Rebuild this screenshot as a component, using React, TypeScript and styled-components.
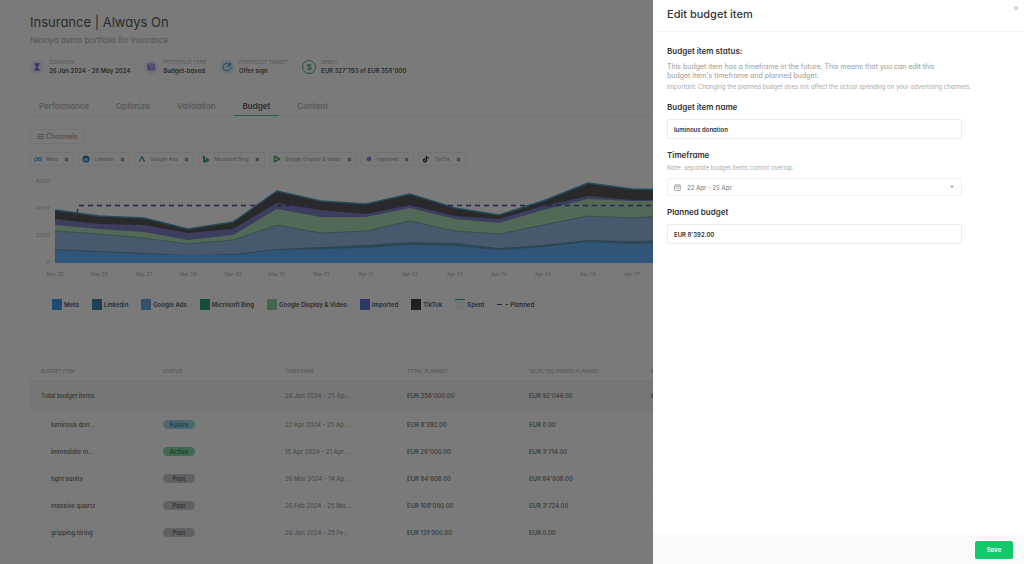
import React from "react";
import styled, { createGlobalStyle } from "styled-components";
import { Hourglass } from "lucide-react";

const GlobalStyle = createGlobalStyle`
  *, *::before, *::after { box-sizing: border-box; }
  body {
    margin: 0;
    background: #fff;
    font-family: Inter, "Liberation Sans", sans-serif;
    font-feature-settings: "cv11";
    color: #5c5c5c;
  }
  button, input, select {
    font-family: inherit;
    font-feature-settings: inherit;
    margin: 0;
  }
  h1, h2, h3, p, dl, dt, dd, ul { margin: 0; padding: 0; }
`;

const Page = styled.main`
  padding: 12px 30px 0;
  height: 100vh;
  overflow: hidden;
`;

const PageTitle = styled.h1`
  font-size: 13px;
  line-height: 20px;
  font-weight: 400;
`;

const Subtitle = styled.p`
  margin-top: 3px;
  font-size: 8px;
  line-height: 10px;
  color: #b4b4b4;
`;

const Facts = styled.dl`
  display: flex;
  gap: 14px;
  margin-top: 14px;
`;

const Fact = styled.div`
  display: grid;
  grid-template-columns: 14px auto;
  column-gap: 5px;
  height: 16px;
`;

const FactIcon = styled.span<{ $tint: string; $color: string; $ring?: boolean }>`
  grid-row: 1 / 3;
  align-self: center;
  display: flex;
  align-items: center;
  justify-content: center;
  width: 14px;
  height: 14px;
  border-radius: 50%;
  background: ${(p) => p.$tint};
  color: ${(p) => p.$color};
  border: ${(p) => (p.$ring ? `1px solid ${p.$color}` : "0")};
  font-size: 8px;
  font-weight: 600;
`;

const FactLabel = styled.dt`
  font-size: 5px;
  line-height: 7px;
  text-transform: uppercase;
  color: #b8b8b8;
`;

const FactValue = styled.dd`
  grid-column: 2;
  font-size: 6px;
  line-height: 9px;
  font-weight: 600;
  white-space: nowrap;
`;

const Tabs = styled.nav`
  display: flex;
  gap: 9px;
  margin-top: 21px;
  border-bottom: 1px solid #f2f2f2;
`;

const Tab = styled.a<{ $active?: boolean }>`
  padding: 4px 9px 3px;
  margin-bottom: -1px;
  border-bottom: 1px solid ${(p) => (p.$active ? "#4fc48a" : "transparent")};
  font-size: 8px;
  line-height: 12px;
  font-weight: ${(p) => (p.$active ? 600 : 500)};
  color: ${(p) => (p.$active ? "#5c5c5c" : "#b4b4b4")};
  text-decoration: none;
`;

const ChannelsButton = styled.button`
  display: flex;
  align-items: center;
  gap: 2px;
  height: 15px;
  margin-top: 13px;
  padding: 0 6px;
  border: 1px solid #f0f0f0;
  border-radius: 2px;
  background: transparent;
  color: #a8a8a8;
  font-size: 7px;
  font-weight: 500;
`;

const Chips = styled.ul`
  display: flex;
  gap: 4px;
  margin-top: 8px;
  list-style: none;
`;

const Chip = styled.li`
  display: flex;
  align-items: center;
  gap: 4px;
  height: 14px;
  padding: 0 3px;
  border: 1px solid #f0f0f0;
  border-radius: 2px;
  color: #ababab;
  font-size: 5px;
  font-weight: 500;
  white-space: nowrap;
`;

const ChipRemove = styled.button`
  display: flex;
  align-items: center;
  justify-content: center;
  width: 7px;
  height: 8px;
  padding: 0;
  margin-left: 1px;
  border: 0;
  background: none;
  color: #8c8c8c;
`;

const ChartDrawing = styled.svg`
  display: block;
  width: 100%;
  height: auto;
  margin-top: 3px;
`;

const AxisText = styled.text`
  font-size: 5px;
  fill: #b4b4b4;
`;

const Legend = styled.ul`
  display: flex;
  gap: 13px;
  margin-top: 19px;
  padding-left: 22px;
  list-style: none;
`;

const LegendItem = styled.li`
  display: flex;
  align-items: center;
  gap: 2px;
  font-size: 6px;
  line-height: 11px;
  font-weight: 600;
  white-space: nowrap;
`;

const Swatch = styled.span<{ $color: string; $line?: string }>`
  width: 10px;
  height: 11px;
  background: ${(p) => p.$color};
  border-top: ${(p) => (p.$line ? `1px solid ${p.$line}` : "0")};
`;

const BudgetTable = styled.table`
  width: 100%;
  margin-top: 52px;
  table-layout: fixed;
  border-collapse: collapse;
`;

const HeadCell = styled.th`
  width: 122px;
  height: 18px;
  padding: 0 11px;
  border-bottom: 1px solid #eee;
  font-size: 5px;
  font-weight: 400;
  text-align: left;
  text-transform: uppercase;
  white-space: nowrap;
  color: #b0b0b0;
`;

const Row = styled.tr<{ $total?: boolean }>`
  height: ${(p) => (p.$total ? 31 : 27)}px;
  background: ${(p) => (p.$total ? "#f7f7f7" : "transparent")};
  border-bottom: 1px solid #f8f8f8;
`;

const Cell = styled.td<{ $muted?: boolean; $nested?: boolean }>`
  padding: 0 11px 0 ${(p) => (p.$nested ? 21 : 11)}px;
  font-size: 6px;
  font-weight: 500;
  white-space: nowrap;
  color: ${(p) => (p.$muted ? "#a0a0a0" : "#6e6e6e")};
`;

const Badge = styled.span<{ $kind: string }>`
  display: block;
  width: 32px;
  border-radius: 5px;
  font-size: 6px;
  line-height: 9px;
  font-weight: 600;
  text-align: center;
  color: ${(p) => (p.$kind === "Future" ? "#4d7f96" : p.$kind === "Active" ? "#3d8560" : "#74747c")};
  background: ${(p) => (p.$kind === "Future" ? "#a0d8ee" : p.$kind === "Active" ? "#86dcae" : "#cbcbd4")};
`;

const Overlay = styled.div`
  position: fixed;
  inset: 0;
  background: rgba(0, 0, 0, 0.52);
`;

const Drawer = styled.aside`
  position: fixed;
  top: 0;
  right: 0;
  bottom: 0;
  display: flex;
  flex-direction: column;
  width: 371px;
  max-width: 100%;
  background: #fff;
  color: #333;
`;

const DrawerHeader = styled.header`
  display: flex;
  justify-content: space-between;
  align-items: flex-start;
  height: 32px;
  padding: 2px 2px 0 14px;
  border-bottom: 1px solid #f5f5f5;
`;

const DrawerTitle = styled.h2`
  font-size: 11px;
  line-height: 24px;
  font-weight: 500;
`;

const CloseButton = styled.button`
  width: 12px;
  height: 12px;
  padding: 0;
  border: 0;
  background: none;
  color: #b5b5b5;
  font-size: 9px;
  line-height: 12px;
`;

const Form = styled.form`
  flex: 1;
  display: flex;
  flex-direction: column;
  padding: 13px 14px 0;
`;

const Section = styled.section`
  display: flex;
  flex-direction: column;
  max-width: 295px;
  margin-bottom: 10px;
`;

const SectionTitle = styled.h3`
  font-size: 8px;
  line-height: 12px;
  font-weight: 600;
`;

const FieldLabel = styled.label`
  font-size: 8px;
  line-height: 12px;
  font-weight: 600;
`;

const Copy = styled.p`
  max-width: 275px;
  margin-top: 5px;
  font-size: 7px;
  line-height: 9px;
  color: #999;
`;

const Note = styled.p`
  margin-top: 3px;
  font-size: 6px;
  line-height: 8px;
  color: #aaa;
  white-space: nowrap;
`;

const TextField = styled.input`
  width: 100%;
  height: 20px;
  margin-top: 6px;
  padding: 0 6px;
  border: 1px solid #ececec;
  border-radius: 2px;
  color: #333;
  font-size: 6px;
  font-weight: 600;
`;

const SelectField = styled.div`
  display: flex;
  align-items: center;
  gap: 6px;
  height: 18px;
  margin-top: 6px;
  padding: 0 6px;
  border: 1px solid #f0f0f0;
  border-radius: 2px;
  color: #999;
`;

const Select = styled.select`
  flex: 1;
  appearance: none;
  padding: 0;
  border: 0;
  background: none;
  color: #999;
  font-size: 6px;
  font-weight: 600;
`;

const DrawerFooter = styled.footer`
  display: flex;
  justify-content: flex-end;
  align-items: center;
  height: 31px;
  padding: 2px 11px 0;
  background: #fafafa;
`;

const SaveButton = styled.button`
  width: 38px;
  height: 18px;
  padding: 0;
  border: 0;
  border-radius: 2px;
  background: #12c868;
  color: #fff;
  font-size: 6px;
  font-weight: 600;
`;

const tabs = ["Performance", "Optimize", "Validation", "Budget", "Content"];

const glyphs: Record<string, React.ReactNode> = {
  Meta: <path d="M.8 5C.8 1.800 2.800 1.800 4 4S7.200 6.200 7.200 4 5.200 1.800 4 4 .8 6.800.8 5Z" fill="none" stroke="#58a8f0" strokeWidth="1.100" />,
  Linkedin: (
    <>
      <circle cx="4" cy="4" r="3.600" fill="#2f7fae" />
      <path d="M2.500 3.400V6M4 6V3.400M4 4.600C4 3 5.700 3 5.700 4.600V6" stroke="#fff" strokeWidth=".8" fill="none" />
    </>
  ),
  "Google Ads": (
    <>
      <path d="M4 1.500 1.500 6.500" stroke="#57b58a" strokeWidth="1.600" />
      <path d="M4 1.500 6.500 6.500" stroke="#4c8fd0" strokeWidth="1.600" />
    </>
  ),
  "Microsoft Bing": <path d="M1 .6 2.800 1.200V5.400L4.800 4.600 3.600 4 3 2.600 7 4V5.700L2.800 7.800 1 6.700Z" fill="#259a7c" />,
  "Google Display & Video": <path d="M1.500 1.200 6.600 4 1.500 6.800Z" fill="none" stroke="#3fae62" strokeWidth="1.500" strokeLinejoin="round" />,
  Imported: <path d="M4 1.300 6.300 2.700V5.300L4 6.700 1.700 5.300V2.700Z" fill="#8d8dd6" />,
  TikTok: <path d="M4.400 1V5.400A1.400 1.400 0 1 1 3 4M4.400 1C4.600 2.300 5.400 2.900 6.600 2.900" fill="none" stroke="#333" strokeWidth="1.500" />,
};

const legend = [
  { name: "Meta", color: "#3fa0f8" },
  { name: "Linkedin", color: "#3d86ae" },
  { name: "Google Ads", color: "#6fa8e4" },
  { name: "Microsoft Bing", color: "#2fa083" },
  { name: "Google Display & Video", color: "#8fd4a3" },
  { name: "Imported", color: "#5a75d0" },
  { name: "TikTok", color: "#444444" },
];

const days = [
  "Mar 25", "Mar 26", "Mar 27", "Mar 28", "Mar 29", "Mar 30", "Mar 31", "Apr 01",
  "Apr 02", "Apr 03", "Apr 04", "Apr 05", "Apr 06", "Apr 07", "Apr 08",
];

/* Upper edge of every stacked series, one value per day. */
const series = {
  tiktok: [41, 47, 49, 60, 53, 22, 32, 35, 25, 39, 46, 32, 14, 20, 21],
  imported: [50, 55, 56, 64, 60, 34, 41, 45, 36, 47, 50, 37, 27, 31, 31],
  display: [56, 60, 63, 71, 66, 40, 48, 48, 39, 50, 54, 41, 30, 32, 32],
  ads: [62, 65, 69, 75, 71, 56, 64, 62, 52, 62, 65, 56, 47, 49, 46],
  linkedin: [80, 82, 84, 86, 85, 80, 78, 76, 73, 74, 79, 76, 71, 72, 71],
  meta: [81, 83, 85, 86, 86, 81, 80, 79, 76, 77, 81, 78, 73, 75, 74],
};

const BASE = 94;
const dayX = (i: number) => Math.round(25 + i * 44.4);
const edge = (v: number[]) => v.map((y, i) => `${dayX(i)},${y}`).join(" ");
const area = (v: number[]) => `${edge(v)} ${dayX(v.length - 1)},${BASE} ${dayX(0)},${BASE}`;

const rows = [
  ["luminous don...", "Future", "22 Apr 2024 - 25 Ap...", "EUR 8'392.00", "EUR 0.00"],
  ["immediate m...", "Active", "15 Apr 2024 - 21 Apr ...", "EUR 26'000.00", "EUR 3'714.00"],
  ["tight sanity", "Past", "26 Mar 2024 - 14 Ap...", "EUR 84'608.00", "EUR 84'608.00"],
  ["massive quartz", "Past", "26 Feb 2024 - 25 Ma...", "EUR 108'000.00", "EUR 3'724.00"],
  ["gripping hiring", "Past", "26 Jan 2024 - 25 Fe...", "EUR 131'000.00", "EUR 0.00"],
];

function Chart() {
  return (
    <ChartDrawing viewBox="0 0 964 111" role="img" aria-label="Spent and planned budget per day">
      {["6,000", "4,000", "2,000", "0"].map((label, i) => (
        <AxisText key={label} x="20" y={14 + i * 27} textAnchor="end">{label}</AxisText>
      ))}
      <polygon points={area(series.tiktok)} fill="#575757" />
      <polygon points={area(series.imported)} fill="#7f7fc8" />
      <polygon points={area(series.display)} fill="#aedbb8" />
      <polygon points={area(series.ads)} fill="#96b9e4" />
      <polygon points={area(series.linkedin)} fill="#5f93ae" />
      <polygon points={area(series.meta)} fill="#66b1fa" />
      <polyline points={edge(series.ads)} fill="none" stroke="#6cab9c" strokeWidth="1" />
      <polyline points={edge(series.tiktok)} fill="none" stroke="#4d9dbb" strokeWidth="1.500" />
      <path d="M47.500 44V40M49 36.500H964" fill="none" stroke="#564e9c" strokeWidth="1.300" strokeDasharray="5 4" />
      {days.map((d, i) => (
        <AxisText key={d} x={dayX(i)} y="107" textAnchor="middle">{d}</AxisText>
      ))}
    </ChartDrawing>
  );
}

export default function App() {
  return (
    <>
      <GlobalStyle />
      <Page>
        <PageTitle>Insurance | Always On</PageTitle>
        <Subtitle>Nexoya demo portfolio for insurance</Subtitle>
        <Facts>
          <Fact>
            <FactIcon $tint="#eeeafd" $color="#7c5fd8"><Hourglass size={8} fill="currentColor" /></FactIcon>
            <FactLabel>Duration</FactLabel>
            <FactValue>26 Jan 2024 - 26 May 2024</FactValue>
          </Fact>
          <Fact>
            <FactIcon $tint="#eeeafd" $color="#7c5fd8">
              <svg width="8" height="8" viewBox="0 0 8 8" fill="none" stroke="currentColor" strokeWidth=".9">
                <rect x=".8" y="1" width="6.400" height="6" rx="1" />
                <path d="M.8 3H7.200M.8 5H7.200M2.600 3V7" />
              </svg>
            </FactIcon>
            <FactLabel>Portfolio type</FactLabel>
            <FactValue>Budget-based</FactValue>
          </Fact>
          <Fact>
            <FactIcon $tint="#d8f0fa" $color="#3ba3cc">
              <svg width="10" height="10" viewBox="0 0 10 10" fill="none" stroke="currentColor">
                <path d="M6.300 1.600A3.700 3.700 0 1 0 8.500 4.200M4.600 5.500 8.600 1.400M6.400 3.600V2L8 .6V2H9.400L8 3.600Z" />
              </svg>
            </FactIcon>
            <FactLabel>Portfolio target</FactLabel>
            <FactValue>Offer sign</FactValue>
          </Fact>
          <Fact>
            <FactIcon $tint="transparent" $color="#45b87c" $ring>$</FactIcon>
            <FactLabel>Spent</FactLabel>
            <FactValue>EUR 327'793 of EUR 358'000</FactValue>
          </Fact>
        </Facts>
        <Tabs>
          {tabs.map((t) => (
            <Tab key={t} href="#" $active={t === "Budget"}>{t}</Tab>
          ))}
        </Tabs>
        <ChannelsButton type="button">
          <svg width="7" height="7" viewBox="0 0 7 7" fill="none" stroke="currentColor" strokeWidth=".8">
            <path d="M0 1.500H7M0 3.500H7M0 5.500H7M4.800.6V2.400M2 2.600V4.400M4.800 4.600V6.400" />
          </svg>
          Channels
        </ChannelsButton>
        <Chips>
          {legend.map(({ name }) => (
            <Chip key={name}>
              <svg width="8" height="8" viewBox="0 0 8 8">{glyphs[name]}</svg>
              {name}
              <ChipRemove type="button" aria-label={`Remove ${name}`}>
                <svg width="5" height="5" viewBox="0 0 5 5" stroke="currentColor" strokeWidth="1.400">
                  <path d="M1 1 4 4M4 1 1 4" />
                </svg>
              </ChipRemove>
            </Chip>
          ))}
        </Chips>
        <Chart />
        <Legend>
          {legend.map((l) => (
            <LegendItem key={l.name}><Swatch $color={l.color} />{l.name}</LegendItem>
          ))}
          <LegendItem><Swatch $color="#f2f6f8" $line="#4d9dbb" />Spent</LegendItem>
          <LegendItem>
            <svg width="11" height="3" viewBox="0 0 11 3"><path d="M0 1.500H5M9 1.500H11" stroke="#564e9c" /></svg>
            Planned
          </LegendItem>
        </Legend>
        <BudgetTable>
          <thead>
            <tr>
              {["Budget item", "Status", "Timeframe", "Total planned", "Selected period planned", "Remaining"].map((h) => (
                <HeadCell key={h}>{h}</HeadCell>
              ))}
              <th aria-label="Actions" />
            </tr>
          </thead>
          <tbody>
            <Row $total>
              <Cell>Total budget items</Cell>
              <Cell />
              <Cell $muted>26 Jan 2024 - 25 Ap...</Cell>
              <Cell>EUR 358'000.00</Cell>
              <Cell>EUR 92'046.00</Cell>
              <Cell>EUR 30'207.00</Cell>
              <Cell />
            </Row>
            {rows.map(([name, status, time, total, selected]) => (
              <Row key={name}>
                <Cell $nested>{name}</Cell>
                <Cell><Badge $kind={status}>{status}</Badge></Cell>
                <Cell $muted>{time}</Cell>
                <Cell>{total}</Cell>
                <Cell>{selected}</Cell>
                <Cell />
                <Cell />
              </Row>
            ))}
          </tbody>
        </BudgetTable>
      </Page>
      <Overlay />
      <Drawer role="dialog" aria-labelledby="drawer-title">
        <DrawerHeader>
          <DrawerTitle id="drawer-title">Edit budget item</DrawerTitle>
          <CloseButton type="button" aria-label="Close">×</CloseButton>
        </DrawerHeader>
        <Form id="budget-form">
          <Section>
            <SectionTitle>Budget item status:</SectionTitle>
            <Copy>
              This budget item has a timeframe in the future. This means that you can edit this budget item's timeframe and
              planned budget.
            </Copy>
            <Note>
              Important: Changing the planned budget does not affect the actual spending on your advertising channels.
            </Note>
          </Section>
          <Section>
            <FieldLabel htmlFor="item-name">Budget item name</FieldLabel>
            <TextField id="item-name" defaultValue="luminous donation" />
          </Section>
          <Section>
            <FieldLabel htmlFor="timeframe">Timeframe</FieldLabel>
            <Note>Note: separate budget items cannot overlap.</Note>
            <SelectField>
              <svg width="7" height="7" viewBox="0 0 7 7" fill="none" stroke="currentColor" strokeWidth=".8">
                <rect x=".6" y="1" width="5.800" height="5.500" rx=".6" />
                <path d="M.6 2.700H6.400M2 0V1.500M5 0V1.500M2.300 4.500H4.700" />
              </svg>
              <Select id="timeframe"><option>22 Apr - 25 Apr</option></Select>
              <svg width="6" height="4" viewBox="0 0 6 4"><path d="M1 .8H5L3 3Z" fill="currentColor" /></svg>
            </SelectField>
          </Section>
          <Section>
            <FieldLabel htmlFor="planned">Planned budget</FieldLabel>
            <TextField id="planned" defaultValue="EUR 8'392.00" />
          </Section>
        </Form>
        <DrawerFooter>
          <SaveButton type="submit" form="budget-form">Save</SaveButton>
        </DrawerFooter>
      </Drawer>
    </>
  );
}
